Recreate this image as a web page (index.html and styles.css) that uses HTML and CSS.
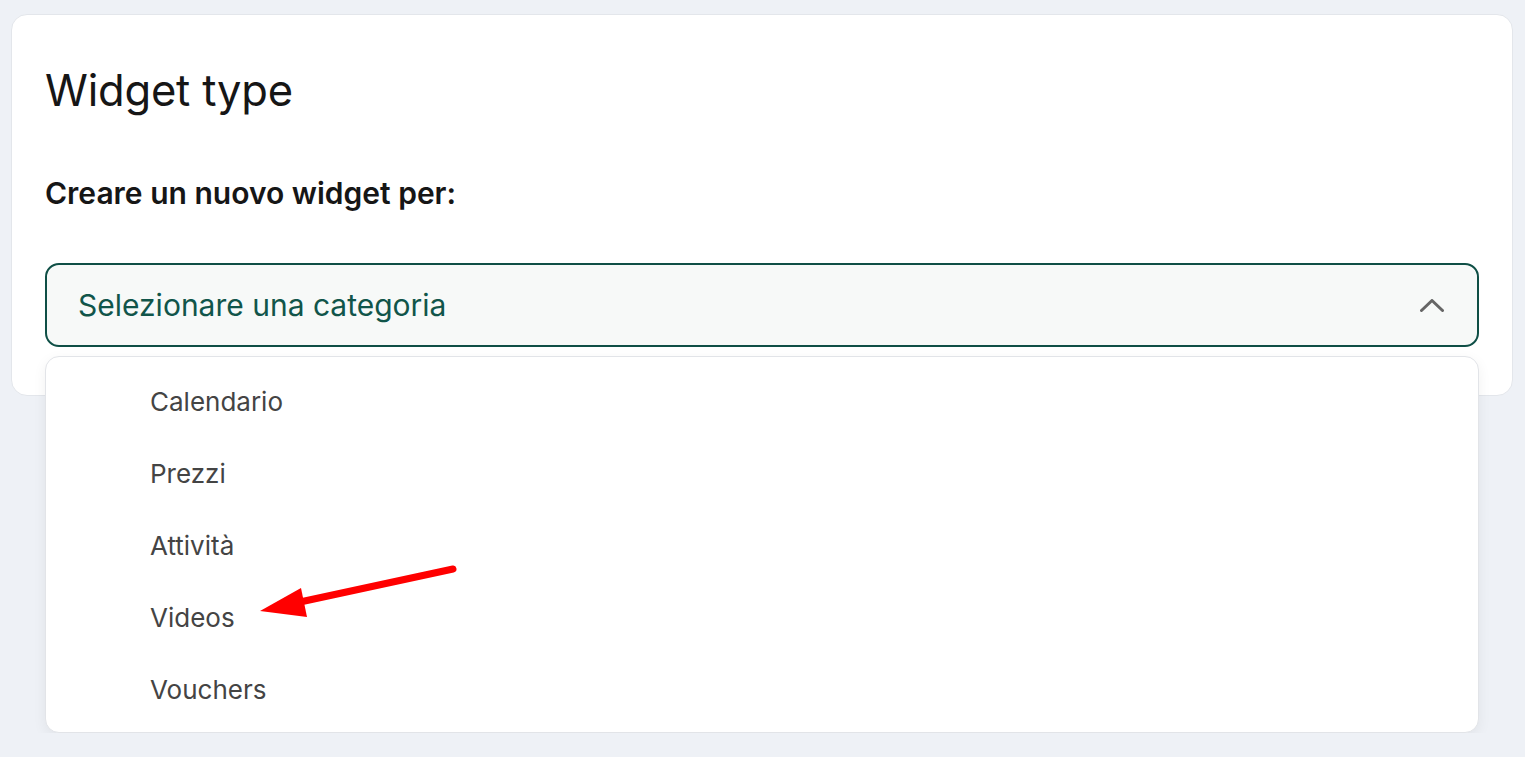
FILE: index.html
```html
<!DOCTYPE html>
<html lang="it">
<head>
    <meta charset="UTF-8">
    <meta name="viewport" content="width=device-width, initial-scale=1.0">
    <title>Widget type</title>
    <link rel="stylesheet" href="styles.css">
</head>
<body>
    <div class="widget-panel">
        <div class="widget-card">
            <h1>Widget type</h1>
            <p class="field-label">Creare un nuovo widget per:</p>
            <button class="select-box" type="button">
                <span>Selezionare una categoria</span>
                <svg class="chevron" width="24" height="13" viewBox="0 0 24 13">
                    <path d="M1.5 11.5 L12 1.5 L22.5 11.5" fill="none" stroke="#666" stroke-width="3" stroke-linecap="round" stroke-linejoin="round"/>
                </svg>
            </button>
        </div>
        <ul class="select-menu">
            <li>Calendario</li>
            <li>Prezzi</li>
            <li>Attività</li>
            <li>Videos</li>
            <li>Vouchers</li>
        </ul>
    </div>
    <svg class="annotation" width="220" height="70" viewBox="250 555 220 70">
        <line x1="453" y1="569" x2="300" y2="602" stroke="#ff0000" stroke-width="7" stroke-linecap="round"/>
        <polygon points="260,611 301,588 307,617" fill="#ff0000"/>
    </svg>
</body>
</html>
```

FILE: styles.css
```css
body {
    font-family: Inter, "Noto Sans", Arial, sans-serif;
    background: #eef1f6;
    color: #161616;
    margin: 0;
    padding: 14px 12px 0 11px;
}
.widget-panel {
    display: flex;
    flex-direction: column;
}
.widget-card {
    background: #fff;
    border: 1px solid #e3e6eb;
    border-radius: 16px;
    padding: 48px 33px 48px 33px;
}
.widget-card h1 {
    font-size: 43.5px;
    font-weight: 400;
    line-height: 54px;
    margin: 0;
    letter-spacing: -0.2px;
}
.field-label {
    font-size: 30px;
    font-weight: 600;
    line-height: 36px;
    margin: 58px 0 52px 0;
}
.select-box {
    width: 100%;
    height: 84px;
    display: flex;
    align-items: center;
    justify-content: space-between;
    padding: 0 33px 0 31px;
    box-sizing: border-box;
    background: #f7f9f8;
    border: 2px solid #0f4f46;
    border-radius: 14px;
    font-family: inherit;
    font-size: 30px;
    color: #11554a;
    cursor: pointer;
}
.select-menu {
    position: relative;
    z-index: 1;
    margin: -40px 34px 0 34px;
    padding: 9px 0 6px 0;
    list-style: none;
    background: #fff;
    border: 1px solid #e2e4e8;
    border-radius: 14px;
    box-shadow: 0 4px 14px rgba(0,0,0,0.06);
}
.select-menu li {
    padding: 0 104px;
    height: 72px;
    line-height: 72px;
    font-size: 26px;
    color: #444;
}
.annotation {
    position: absolute;
    left: 250px;
    top: 555px;
    z-index: 2;
}
```
